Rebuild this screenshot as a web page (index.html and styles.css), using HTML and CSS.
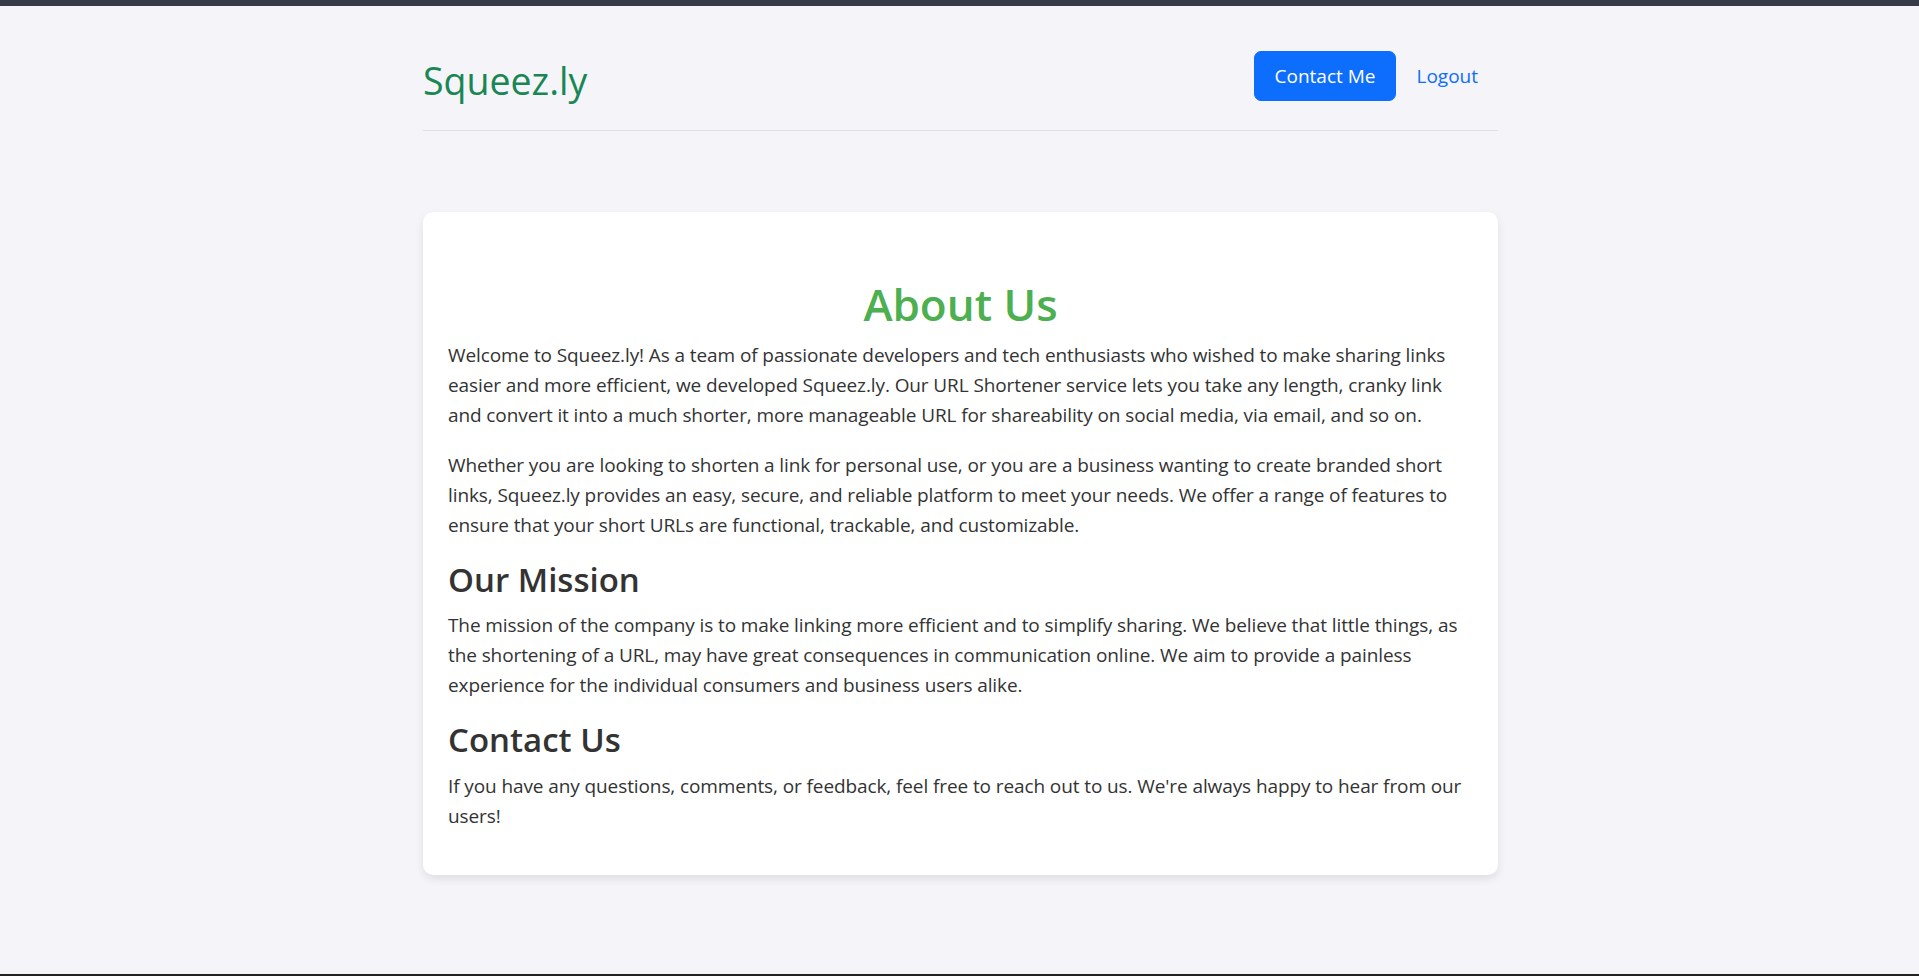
FILE: index.html
```html
<!DOCTYPE html>
<html lang="en">
<head>
<meta charset="utf-8">
<title>About Us - Squeez.ly</title>
<link rel="stylesheet" href="styles.css">
</head>
<body>
<div class="topbar"></div>
<main class="page">
  <div class="container">
    <header class="site-header">
      <a class="brand" href="#">Squeez.ly</a>
      <nav class="nav">
        <a class="btn-primary" href="#">Contact Me</a>
        <a class="nav-link" href="#">Logout</a>
      </nav>
    </header>

    <section class="card">
      <h1 class="title">About Us</h1>
      <p>Welcome to Squeez.ly! As a team of passionate developers and tech enthusiasts who wished to make sharing links easier and more efficient, we developed Squeez.ly. Our URL Shortener service lets you take any length, cranky link and convert it into a much shorter, more manageable URL for shareability on social media, via email, and so on.</p>
      <p>Whether you are looking to shorten a link for personal use, or you are a business wanting to create branded short links, Squeez.ly provides an easy, secure, and reliable platform to meet your needs. We offer a range of features to ensure that your short URLs are functional, trackable, and customizable.</p>
      <h2 class="section-title">Our Mission</h2>
      <p>The mission of the company is to make linking more efficient and to simplify sharing. We believe that little things, as the shortening of a URL, may have great consequences in communication online. We aim to provide a painless experience for the individual consumers and business users alike.</p>
      <h2 class="section-title">Contact Us</h2>
      <p class="last">If you have any questions, comments, or feedback, feel free to reach out to us. We're always happy to hear from our users!</p>
    </section>
  </div>
</main>
<div class="bottombar"></div>
</body>
</html>
```
FILE: styles.css
```css
* { box-sizing: border-box; }

html, body {
  margin: 0;
  padding: 0;
}

body {
  min-height: 100vh;
  display: flex;
  flex-direction: column;
  background: #f4f4f9;
  color: #333;
  font-family: "Open Sans", "Noto Sans", sans-serif;
  font-size: 19px;
  line-height: 30px;
  letter-spacing: -0.1px;
}

.topbar {
  height: 6px;
  background: #373a47;
  flex: none;
}

.bottombar {
  height: 2px;
  background: #222;
  flex: none;
}

.page {
  flex: 1;
  padding-left: 2px;
}

.container {
  width: 1075px;
  margin: 0 auto;
  padding-top: 24px;
}

.site-header {
  display: flex;
  justify-content: space-between;
  align-items: flex-start;
  padding: 20px 0;
  border-bottom: 1px solid #dee2e6;
}

.brand {
  display: block;
  font-size: 37.5px;
  line-height: 58px;
  height: 60px;
  padding-top: 2px;
  color: #198754;
  text-decoration: none;
  letter-spacing: 0;
}

.nav {
  display: flex;
  align-items: center;
  margin-top: 1px;
}

.btn-primary {
  display: block;
  background: #0d6efd;
  color: #fff;
  border: 1px solid #0d6efd;
  border-radius: 7px;
  padding: 9px 20px;
  line-height: 30px;
  text-decoration: none;
  letter-spacing: 0;
}

.nav-link {
  display: block;
  padding: 10px 20px;
  line-height: 30px;
  color: #0d6efd;
  text-decoration: none;
  letter-spacing: 0;
}

.card {
  margin-top: 81px;
  background: #fff;
  border-radius: 10px;
  box-shadow: 0 4px 9px rgba(0, 0, 0, 0.09);
  padding: 25px;
}

.title {
  margin: 41px 0 9px;
  text-align: center;
  color: #4caf50;
  font-size: 44px;
  font-weight: 600;
  line-height: 1.2;
  letter-spacing: 0;
}

.card p {
  margin: 0 0 20px;
}

.card p.last {
  margin-bottom: 19px;
}

.section-title {
  margin: 5px 0 11px;
  color: #333;
  font-size: 33px;
  font-weight: 600;
  line-height: 1.2;
  letter-spacing: 0;
}
```
